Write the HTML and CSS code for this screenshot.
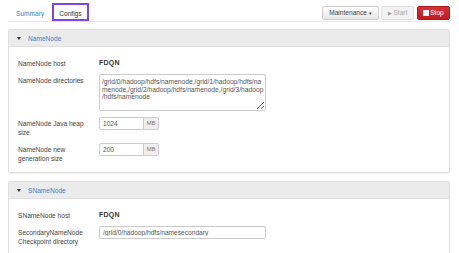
FILE: index.html
```html
<!doctype html>
<html lang="en">
<head>
<meta charset="utf-8">
<meta name="viewport" content="width=device-width,initial-scale=1">
<title>HDFS Configs</title>
<link rel="stylesheet" href="styles.css">
</head>
<body>
<main class="page">
<nav class="topbar">
  <div class="tabs">
    <a class="tab">Summary</a>
    <a class="tab active">Configs</a>
  </div>
  <div class="actions">
    <button class="btn">Maintenance <span class="caret">▾</span></button>
    <button class="btn disabled"><span class="play">▶</span> Start</button>
    <button class="btn red"><span class="sq"></span>Stop</button>
  </div>
</nav>

<section class="panel">
  <div class="panel-head"><span class="tri"></span><a>NameNode</a></div>
  <div class="panel-body">
    <div class="row short">
      <label>NameNode host</label>
      <span class="val">FDQN</span>
    </div>
    <div class="row">
      <label>NameNode directories</label>
      <textarea class="area">/grid/0/hadoop/hdfs/namenode,/grid/1/hadoop/hdfs/na
menode,/grid/2/hadoop/hdfs/namenode,/grid/3/hadoop
/hdfs/namenode</textarea>
    </div>
    <div class="row">
      <label>NameNode Java heap size</label>
      <div class="group"><input class="num" value="1024"><span class="addon">MB</span></div>
    </div>
    <div class="row">
      <label>NameNode new generation size</label>
      <div class="group"><input class="num" value="200"><span class="addon">MB</span></div>
    </div>
  </div>
</section>

<section class="panel">
  <div class="panel-head"><span class="tri"></span><a>SNameNode</a></div>
  <div class="panel-body">
    <div class="row short">
      <label>SNameNode host</label>
      <span class="val">FDQN</span>
    </div>
    <div class="row">
      <label>SecondaryNameNode Checkpoint directory</label>
      <input class="wide" value="/grid/0/hadoop/hdfs/namesecondary">
    </div>
  </div>
</section>
</main>
</body>
</html>
```

FILE: styles.css
```css
:root{--text:#444;--blue:#3b80c6;--line:#dedede;--head:#ebebeb;--purple:#8043f0}
*{box-sizing:border-box}
html,body{margin:0;height:253px;overflow:hidden}
body{background:#fff;color:var(--text);font-family:"Liberation Sans",Arial,sans-serif;font-size:6.6px}
.page{padding:0 9px 0 8px}
.topbar{display:flex;justify-content:space-between;align-items:flex-end;padding-top:3px;border-bottom:1px solid #e8e8e8;height:22px}
.tabs{display:flex;align-items:flex-end}
.tab{display:block;height:18px;padding:4px 6px 0;line-height:10px;color:var(--blue);border:2px solid transparent}
.tab.active{color:#333;border-color:var(--purple);padding:4px 5px 0}
.actions{display:flex;gap:2px;margin-bottom:1px}
.btn{font:inherit;height:14px;padding:0 5px;line-height:12px;border:1px solid #cdcdcd;border-radius:2px;background:linear-gradient(#fff,#e6e6e6);color:#444}
.btn:first-child{width:57px}
.btn.disabled{width:33px;color:#aaa;background:#f2f2f2;border-color:#e0e0e0}
.btn.red{width:33px;margin-left:1px;color:#fff;background:linear-gradient(#dc3033,#c01b1e);border-color:#a8171a}
.caret{font-size:5px}
.play{font-size:5px;color:#999}
.sq{display:inline-block;width:6px;height:6px;background:#fff;margin-right:1px;vertical-align:-1px}
.panel{border:1px solid var(--line);border-radius:2px;margin-top:7px;box-shadow:0 1px 1px rgba(0,0,0,.05)}
.panel+.panel{margin-top:8px}
.panel-head{display:flex;align-items:center;height:17px;padding-left:8px;background:var(--head);border-bottom:1px solid var(--line)}
.panel-head a{color:var(--blue)}
.tri{width:0;height:0;border-left:2px solid transparent;border-right:2px solid transparent;border-top:3px solid #333;margin-right:7px}
.panel-body{padding:10px 9px 9px;display:grid;gap:6px}
.row{display:grid;grid-template-columns:81px 1fr;align-items:start}
.row label{padding-top:2px;line-height:9px;padding-right:14px}
.row.short{height:11px}
.val{font-size:7px;font-weight:bold;color:#333;line-height:11px;letter-spacing:.2px}
.area{font:inherit;font-size:6.7px;width:167px;height:37px;padding:3px 2px;line-height:7.5px;border:1px solid #ccc;border-radius:2px;color:#555;resize:vertical;white-space:pre;overflow:hidden}
.group{display:flex}
.num,.wide{font:inherit;height:13px;border:1px solid #ccc;padding:0 3px;color:#555;border-radius:2px}
.num{width:45px;border-radius:2px 0 0 2px}
.wide{width:167px}
.addon{height:13px;width:15px;line-height:11px;text-align:center;background:#eee;border:1px solid #ccc;border-left:0;border-radius:0 2px 2px 0;color:#777;font-size:6px}
```
